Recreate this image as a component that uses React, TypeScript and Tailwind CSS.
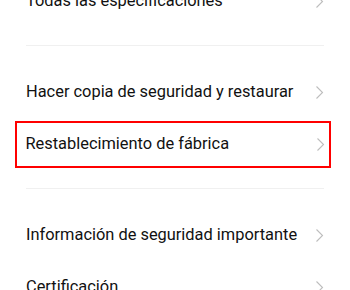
import React from "react";

function Chevron() {
  return (
    <svg width="9" height="15" viewBox="0 0 9 15" className="shrink-0">
      <path d="M1.5 1.5 L7.5 7.5 L1.5 13.5" fill="none" stroke="#bdbdbd" strokeWidth="1.1" />
    </svg>
  );
}

function Row({ label }: { label: string }) {
  return (
    <div className="flex h-[52px] items-center justify-between pl-[26px] pr-[26px]">
      <span className="text-[16.4px] text-[#111111]">{label}</span>
      <Chevron />
    </div>
  );
}

function Divider() {
  return <div className="mx-[26px] my-[18px] h-px bg-[#f0f0f0]" />;
}

export default function App() {
  return (
    <div
      className="h-[290px] w-[350px] overflow-hidden bg-white"
      style={{ fontFamily: "Roboto, 'Noto Sans', sans-serif" }}
    >
      <div className="-mt-[25px] flex flex-col">
        <Row label="Todas las especificaciones" />
        <Divider />
        <div className="h-[2px]" />
        <Row label="Hacer copia de seguridad y restaurar" />
        <div className="flex h-[52px] items-center py-px pl-[15px] pr-[19px]">
          <div className="flex h-[47px] flex-1 items-center justify-between border-[2.5px] border-[#ff0000] pl-[8.5px] pr-[4.5px]">
            <span className="text-[16.4px] text-[#111111]">Restablecimiento de fábrica</span>
            <Chevron />
          </div>
        </div>
        <Divider />
        <div className="h-[2px]" />
        <Row label="Información de seguridad importante" />
        <Row label="Certificación" />
      </div>
    </div>
  );
}
